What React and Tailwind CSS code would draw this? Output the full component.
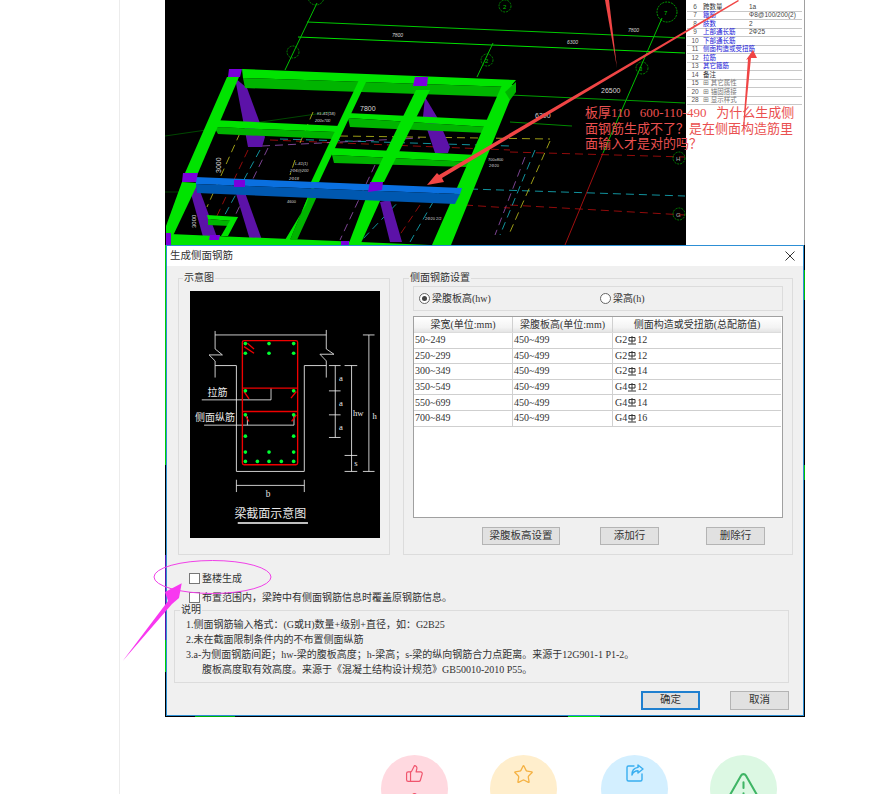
import React from 'react';
import { ThumbsUp, Star, TriangleAlert } from 'lucide-react';

const BR = '#00e400', DK = '#00b400', PT = '#7a00dc', PD = '#5c12a8', BT = '#0a70e0', BD = '#0058b0';

const polys = [
  // purple shafts
  [PD, '235,78 247,88 265,137 262,147 248,147'],
  [PD, '425,97 437,117 450,147 448,153 435,153 423,117'],
  [PD, '188,183 197,183 217,237 203,237'],
  [PD, '234,187 243,187 262,240 250,240'],
  [PD, '380,202 390,200 402,242 390,242'],
  // horizontal beams
  [BR, '242,69 516,80 510,87 243,78'],
  [DK, '243,78 510,87 505,97 245,88'],
  [BR, '213,120 340,126 335,132 214,127'],
  [DK, '214,127 335,132 333,139 218,134'],
  [BR, '347,113 492,120 487,127 348,118'],
  [DK, '348,118 487,127 485,133 350,127'],
  [BR, '332,148 478,155 473,162 332,155'],
  [DK, '332,155 473,162 467,167 334,163'],
  [BR, '207,215 238,217 232,221 208,219'],
  [DK, '208,219 232,221 230,226 208,225'],
  [BR, '170,234 430,245 170,245'],
  // diagonal beams
  [BR, '227,77 239,77 198,173 185,173'],
  [BR, '182,182 198,183 171,240 166,240 166,226'],
  [BR, '359,80 366,82 319,182 311,182'],
  [DK, '312,187 319,192 297,240 290,240'],
  [BR, '306,205 312,187 290,240 285,240'],
  [BR, '416,90 430,90 384,182 371,182'],
  [BR, '369,190 384,192 361,243 349,243'],
  [BR, '502,85 516,85 451,245 432,245'],
  [DK, '516,82 516,92 510,100 505,92'],
  [BR, '232,217 238,217 228,236 221,236'],
  // blue beam
  [BT, '195,177 462,188 460,194 196,184'],
  [BD, '196,184 460,194 455,204 197,193'],
  // caps
  [PT, '229,69 242,69 240,77 228,77'],
  [PT, '415,77 428,77 427,86 413,86'],
  [PT, '183,173 198,173 196,182 182,182'],
  [PT, '234,180 245,180 245,187 234,187'],
  [PT, '370,182 383,182 382,190 368,192'],
  [PT, '210,235 220,235 219,240 209,240'],
  [PT, '341,241 349,241 349,245 341,245'],
  [PT, '166,233 171,233 171,245 166,245'],
];

const cadLines = [
  ['#00c800', 307, 22, 685, 38, 1], ['#00e000', 298, 37, 685, 53, 1],
  ['#00c000', 317, 3, 285, 70, 1], ['#00c000', 493, 43, 477, 77, 1],
  ['#00c000', 662, 18, 603, 153, 1], ['#00a000', 510, 95, 685, 103, 1],
  ['#008800', 510, 122, 572, 126, 1], ['#006600', 165, 136, 330, 112, 0.7],
  ['#a01010', 603, 153, 565, 245, 1], ['#005500', 165, 192, 190, 192, 0.7],
];
const dashed = [
  ['#d01010', 270, 140, 510, 150], ['#d01010', 510, 152, 685, 157], ['#d01010', 510, 205, 685, 215],
  ['#18d0e0', 280, 139, 510, 146], ['#18d0e0', 470, 189, 685, 196], ['#b060d0', 262, 146, 420, 138],
  ['#e0e020', 340, 136, 550, 139], ['#e0e020', 313, 112, 300, 143], ['#e0e020', 240, 133, 207, 207],
  ['#e0e020', 550, 141, 510, 232], ['#18d0e0', 260, 150, 222, 220], ['#d01010', 248, 150, 215, 220],
  ['#b060d0', 268, 148, 232, 222], ['#e0e020', 295, 160, 290, 175], ['#b060d0', 525, 157, 495, 235],
  ['#18d0e0', 535, 150, 500, 235], ['#b060d0', 375, 165, 340, 240], ['#18d0e0', 405, 195, 360, 242],
  ['#d01010', 420, 205, 395, 242], ['#d01010', 465, 205, 510, 208], ['#18d0e0', 440, 190, 410, 242],
];
const axisCircles = [[316, -3, 8, '#00a000'], [293, 52, 6, '#00a000'], [487, 60, 6, '#00a000'], [505, 6, 6, '#00a000'], [667, 12, 10, '#00c000'], [642, 68, 6, '#00a000'], [679, 158, 6, '#00a000'], [679, 214, 6, '#00a000']];

function CadDrawing() {
  return (
    <svg className="absolute inset-0" width="640" height="717" viewBox="165 0 640 717">
      {cadLines.map((l, i) => <line key={i} x1={l[1]} y1={l[2]} x2={l[3]} y2={l[4]} stroke={l[0]} strokeWidth={l[5]} />)}
      {dashed.map((l, i) => <line key={i} x1={l[1]} y1={l[2]} x2={l[3]} y2={l[4]} stroke={l[0]} strokeWidth="0.7" strokeDasharray="8 5" />)}
      {axisCircles.map((c, i) => <circle key={i} cx={c[0]} cy={c[1]} r={c[2]} fill="none" stroke={c[3]} strokeWidth="0.8" strokeDasharray="2 1" />)}
      <g fontFamily="'Liberation Sans',sans-serif" fill="#d8d8d8">
        <text x="392" y="37" fontSize="5" fontStyle="italic">7800</text>
        <text x="628" y="32" fontSize="5" fontStyle="italic">7800</text>
        <text x="567" y="44" fontSize="5" fontStyle="italic">6300</text>
        <text x="360" y="111" fontSize="7">7800</text>
        <text x="601" y="93" fontSize="7">26500</text>
        <text x="535" y="118" fontSize="7">6300</text>
        <text x="0" y="0" fontSize="7" transform="translate(221,173) rotate(-90)">3000</text>
        <text x="0" y="0" fontSize="6" transform="translate(196,228) rotate(-90)">3000</text>
        <text x="295" y="165" fontSize="4" fontStyle="italic">L-61(1)</text>
        <text x="290" y="172" fontSize="4" fontStyle="italic">2Φ6@200</text>
        <text x="289" y="180" fontSize="4" fontStyle="italic">2Φ18</text>
        <text x="317" y="115" fontSize="4" fontStyle="italic">KL-61(1B)</text>
        <text x="315" y="122" fontSize="4" fontStyle="italic">200x700</text>
        <text x="287" y="203" fontSize="4">4600</text>
        <text x="425" y="220" fontSize="4">2Φ20 2/2</text>
        <text x="488" y="161" fontSize="4">700x800</text>
        <text x="489" y="167" fontSize="4">2Φ20</text>
      </g>
      <text x="676" y="161" fontSize="6" fill="#b0b0b0" fontFamily="'Liberation Sans',sans-serif">H</text>
      <text x="676" y="217" fontSize="6" fill="#b0b0b0" fontFamily="'Liberation Sans',sans-serif">G</text>
      <text x="639" y="71" fontSize="6" fill="#00c000" fontFamily="'Liberation Sans',sans-serif">3</text>
      <text x="664" y="15" fontSize="6" fill="#00c000" fontFamily="'Liberation Sans',sans-serif">7</text>
      <text x="503" y="9" fontSize="6" fill="#00c000" fontFamily="'Liberation Sans',sans-serif">2</text>
      <text x="485" y="63" fontSize="6" fill="#00c000" fontFamily="'Liberation Sans',sans-serif">2</text>
      {polys.map((p, i) => <polygon key={i} fill={p[0]} points={p[1]} />)}
      {/* parts of the drawing seen along the dialog's edges */}
      <line x1="165.5" y1="245" x2="165.5" y2="465" stroke="#00d000" />
      <line x1="165.5" y1="555" x2="165.5" y2="640" stroke="#5c12a8" />
      <line x1="165.5" y1="640" x2="165.5" y2="672" stroke="#00d000" />
      <line x1="195" y1="716.5" x2="235" y2="716.5" stroke="#00b000" />
      <line x1="568" y1="716.5" x2="600" y2="716.5" stroke="#00e000" />
      <line x1="804.5" y1="270" x2="804.5" y2="300" stroke="#00c000" />
      <line x1="804.5" y1="465" x2="804.5" y2="480" stroke="#00c000" />
    </svg>
  );
}

const panelRows = [
  ['6', '跨数量', '1a', 0], ['7', '箍筋', 'Φ8@100/200(2)', 1], ['8', '肢数', '2', 1],
  ['9', '上部通长筋', '2Φ25', 1], ['10', '下部通长筋', '', 1], ['11', '侧面构造或受扭筋', '', 1], ['12', '拉筋', '', 1],
  ['13', '其它箍筋', '', 1], ['14', '备注', '', 0], ['15', '⊞ 其它属性', '', 2], ['20', '⊞ 锚固搭接', '', 2], ['28', '⊞ 显示样式', '', 2],
];

function PropertyPanel() {
  return (
    <div className="absolute left-[521px] top-0 w-[119px] h-[245px] bg-white border-r border-[#a0a0a0] overflow-hidden font-['Liberation_Sans','Noto_Sans_CJK_SC',sans-serif] text-[6.5px] leading-none">
      <div className="flex flex-col pt-[3px]">
        {panelRows.map((r) => (
          <div key={r[0]} className="flex items-center h-[8.5px] border-b border-[#c8c8c8] ml-[1px] mr-[2px]">
            <span className="w-[16px] text-center text-[#555]">{r[0]}</span>
            <span className={r[3] === 1 ? 'w-[46px] whitespace-nowrap text-[#2020d8]' : r[3] === 2 ? 'w-[46px] whitespace-nowrap text-[#777]' : 'w-[46px] whitespace-nowrap text-[#333]'}>{r[1]}</span>
            <span className="text-[#444] whitespace-nowrap">{r[2]}</span>
          </div>
        ))}
      </div>
    </div>
  );
}

function BeamSection() {
  const dots = [[239,296],[310,296],[384,296],[239,325],[310,325],[384,325],[239,438],[384,438],[239,510],[384,510],[239,574],[384,574],[239,622],[310,622],[384,622],[239,650],[275,650],[310,650],[347,650],[384,650]];
  const white = ['148,258 148,312 170,330 130,330 148,348 148,398', '482,255 482,312 505,328 463,328 482,348 482,398', '148,270 482,270', '108,465 316,465 316,430', '115,541 385,541 385,510', '245,515 245,541',
    '509,362 509,578', '490,362 525,362', '490,438 525,438', '490,510 525,510', '490,578 525,578', '558,362 558,680', '537,362 575,362', '537,632 575,632', '537,680 575,680',
    '610,270 610,680', '592,270 627,270', '592,680 627,680', '212,722 416,722', '212,705 212,742', '416,705 416,742'];
  const red = ['245,295 265,312', '235,305 265,325', '235,440 250,462', '392,440 376,460', '238,510 250,530', '392,510 378,530', '230,430 396,430', '230,500 396,500'];
  const labels = [['拉筋', 125, 452, 30], ['侧面纵筋', 88, 528, 30], ['a', 520, 408, 26], ['a', 520, 485, 26], ['a', 520, 555, 26], ['hw', 562, 514, 26], ['s', 566, 664, 26], ['h', 621, 524, 26], ['b', 300, 757, 28], ['梁截面示意图', 206, 821, 36]];
  return (
    <svg width="190" height="247" viewBox="73 138 570 742" className="block bg-black">
      <polyline points="148,362 212,362 212,680 416,680 416,362 482,362" fill="none" stroke="#d0d0d0" strokeWidth="3" />
      {white.map((p) => <polyline key={p} points={p} fill="none" stroke="#f0f0f0" strokeWidth="2.5" />)}
      <rect x="230" y="287" width="166" height="373" rx="5" fill="none" stroke="#f00000" strokeWidth="4" />
      {red.map((p) => <polyline key={p} points={p} fill="none" stroke="#f00000" strokeWidth="4" />)}
      {dots.map((d) => <circle key={d.join()} cx={d[0]} cy={d[1]} r="5.5" fill="#00ff30" />)}
      <line x1="216" y1="835" x2="427" y2="835" stroke="#fff" strokeWidth="4" />
      {labels.map((l) => <text key={l[0] + l[1]} x={l[1]} y={l[2]} fontSize={l[3]} fill="#e8e8e8" fontFamily="'Liberation Serif','Noto Sans CJK SC',serif">{l[0]}</text>)}
    </svg>
  );
}

function Rebar() {
  return (
    <svg width="8" height="9" viewBox="0 0 8 9" className="inline-block mx-[1px] align-[-1px]">
      <path d="M1 1.5h6v3.5H1zM4 0v7.5M0 8h8" fill="none" stroke="#333" strokeWidth="1" />
    </svg>
  );
}

const rows = [
  ['50~249', 'G2', '12'], ['250~299', 'G2', '12'], ['300~349', 'G2', '14'],
  ['350~549', 'G4', '12'], ['550~699', 'G4', '14'], ['700~849', 'G4', '16'],
];

function Btn({ children, className = '' }) {
  return <button className={"flex items-center justify-center h-[18px] bg-[#e1e1e1] border border-[#b4b4b4] text-[10.5px] text-[#333] " + className}>{children}</button>;
}

function Radio({ on }) {
  return (
    <span className="w-[11px] h-[11px] rounded-full border border-[#666] bg-white flex items-center justify-center">
      {on && <span className="w-[5px] h-[5px] rounded-full bg-[#444]" />}
    </span>
  );
}

function Dialog() {
  return (
    <div className="absolute left-[1px] top-[245px] w-[638px] h-[471px] border border-[#2d8fd5] bg-[#f0f0f0] font-['Liberation_Serif','Noto_Sans_CJK_SC',serif] text-[10px] leading-none text-[#333]">
      <div className="h-[20px] bg-white flex items-center justify-between pl-[3px] pr-[5px]">
        <span className="text-[10.5px]">生成侧面钢筋</span>
        <svg width="16" height="16" viewBox="0 0 16 16"><path d="M3.5 3.5l9 9M12.5 3.5l-9 9" stroke="#333" strokeWidth="1" /></svg>
      </div>
      <div className="pl-[7px] pr-[14px]">
        <div className="flex gap-[13px] ml-[4px] mt-[12px] w-[615px]">
          <div className="relative w-[212px] shrink-0 h-[277px] border border-[#dcdcdc] pl-[11px] pt-[12px]">
            <span className="absolute left-[4px] -top-[6px] bg-[#f0f0f0] px-[1px]">示意图</span>
            <BeamSection />
          </div>
          <div className="relative w-[390px] shrink-0 h-[277px] border border-[#dcdcdc] pl-[9px] pt-[7px]">
            <span className="absolute left-[5px] -top-[6px] bg-[#f0f0f0] px-[1px]">侧面钢筋设置</span>
            <div className="w-[370px] h-[25px] border border-[#dcdcdc] flex items-center pl-[5px]">
              <div className="flex items-center gap-[2px] w-[181px]"><Radio on /><span>梁腹板高(hw)</span></div>
              <div className="flex items-center gap-[2px]"><Radio /><span>梁高(h)</span></div>
            </div>
            <div className="w-[370px] h-[202px] mt-[5px] border border-[#a0a0a0] bg-white">
              <div className="w-[367px]">
                <div className="flex h-[16px] bg-[linear-gradient(#fff,#f3f3f3_70%,#e4e4e4)] border-b border-[#dcdcdc] text-center items-center">
                  <span className="w-[99px] border-r border-[#d0d0d0] h-full flex items-center justify-center">梁宽(单位:mm)</span>
                  <span className="w-[100px] border-r border-[#d0d0d0] h-full flex items-center justify-center">梁腹板高(单位:mm)</span>
                  <span className="flex-1 flex items-center justify-center">侧面构造或受扭筋(总配筋值)</span>
                </div>
                {rows.map((r) => (
                  <div key={r[0]} className="flex h-[15.6px] items-center border-b border-[#cfcfcf]">
                    <span className="w-[99px] h-full border-r border-[#d0d0d0] flex items-center pl-[1px]">{r[0]}</span>
                    <span className="w-[100px] h-full border-r border-[#d0d0d0] flex items-center pl-[1px]">450~499</span>
                    <span className="flex-1 h-full flex items-center pl-[2px]">{r[1]}<Rebar />{r[2]}</span>
                  </div>
                ))}
              </div>
            </div>
            <div className="flex mt-[9px] pl-[69px]">
              <Btn className="w-[78px]">梁腹板高设置</Btn>
              <Btn className="w-[59px] ml-[40px]">添加行</Btn>
              <Btn className="w-[59px] ml-[47px]">删除行</Btn>
            </div>
          </div>
        </div>
        <div className="flex items-center gap-[2px] ml-[15px] mt-[18px] h-[11px]">
          <span className="w-[11px] h-[11px] border border-[#777] bg-white" /><span>整楼生成</span>
        </div>
        <div className="flex items-center gap-[2px] ml-[15px] mt-[8px] h-[11px]">
          <span className="w-[11px] h-[11px] border border-[#777] bg-white" /><span>布置范围内，梁跨中有侧面钢筋信息时覆盖原钢筋信息。</span>
        </div>
        <div className="relative h-[73px] mt-[7px] border border-[#dcdcdc] pl-[11px] pt-[6px]">
          <span className="absolute left-[5px] -top-[6px] bg-[#f0f0f0] px-[1px]">说明</span>
          <div className="h-[15px] flex items-center">1.侧面钢筋输入格式：(G或H)数量+级别+直径，如：G2B25</div>
          <div className="h-[15px] flex items-center">2.未在截面限制条件内的不布置侧面纵筋</div>
          <div className="h-[15px] flex items-center whitespace-nowrap">3.a-为侧面钢筋间距；hw-梁的腹板高度；h-梁高；s-梁的纵向钢筋合力点距离。来源于12G901-1 P1-2。</div>
          <div className="h-[15px] flex items-center pl-[16px] whitespace-nowrap">腹板高度取有效高度。来源于《混凝土结构设计规范》GB50010-2010 P55。</div>
        </div>
        <div className="flex justify-end mt-[8px]">
          <Btn className="w-[59px] h-[19px] !border-2 !border-[#1f7fcf]">确定</Btn>
          <Btn className="w-[59px] h-[19px] ml-[30px]">取消</Btn>
        </div>
      </div>
    </div>
  );
}

function Annotations() {
  return (
    <svg className="absolute inset-0 pointer-events-none" width="882" height="794" viewBox="0 0 882 794">
      <polygon fill="#f04545" points="738,0 739,1 442,178 444,182 427,185 437,173 439,175" />
      <polygon fill="#f04545" points="605,0 609,0 617,68" />
      <polygon fill="#f04545" points="753,50 757,58 751,58 744,128 743,128 748,59 746,60" />
      <g fill="#ea5050" fontSize="13" fontFamily="'Liberation Serif','Noto Sans CJK SC',serif">
        <text x="585" y="117">{'板厚110\u00a0\u00a0\u00a0600-110-490\u00a0\u00a0\u00a0为什么生成侧'}</text>
        <text x="585" y="133">面钢筋生成不了？是在侧面构造筋里</text>
        <text x="585" y="148">面输入才是对的吗？</text>
      </g>
      <ellipse cx="212.5" cy="577" rx="58.5" ry="16.5" fill="none" stroke="#f040e8" strokeWidth="1" />
      <polygon fill="#f838f0" points="122.7,661 168,601 165,592 181.7,583.3 179,598 172,604" />
    </svg>
  );
}

function Action({ bg, className = '', children }) {
  return <div className={"w-[67px] h-[67px] rounded-full flex flex-col items-center pt-[9px] " + bg + " " + className}>{children}</div>;
}

export default function App() {
  return (
    <div className="relative w-[882px] h-[794px] overflow-hidden bg-white flex">
      <div className="w-[120px] shrink-0 border-r border-[#ececec]" />
      <div className="pl-[45px] flex flex-col">
        <div className="relative w-[640px] h-[717px] bg-black shrink-0">
          <CadDrawing />
          <PropertyPanel />
          <Dialog />
        </div>
        <div className="flex mt-[38px] ml-[216px] shrink-0">
          <Action bg="bg-[#ffd9e0]">
            <ThumbsUp size={19} strokeWidth={1.5} color="#f0566e" />
            <span className="mt-[9px] text-[12px] leading-none text-[#f0566e] font-['Liberation_Sans',sans-serif]">0</span>
          </Action>
          <Action bg="bg-[#ffeecc]" className="ml-[42px]"><Star size={21} strokeWidth={1.5} color="#f5b244" /></Action>
          <Action bg="bg-[#d3efff]" className="ml-[44px]">
            <svg width="18" height="18" viewBox="0 0 18 18" fill="none" stroke="#38aef0" strokeWidth="1.4" strokeLinejoin="round" strokeLinecap="round">
              <path d="M8 2H2.5A1.5 1.5 0 0 0 1 3.5v12A1.5 1.5 0 0 0 2.5 17h12a1.5 1.5 0 0 0 1.5-1.5V10" />
              <path d="M12 1l5 4-5 4V6.8C9 6.8 7 8.3 6 11c-.2-4.5 2-7 6-7.6z" />
            </svg>
          </Action>
          <Action bg="bg-[#dcf8e3]" className="ml-[42px]">
            <TriangleAlert size={33} strokeWidth={1.5} color="#3fb565" className="mt-[6px]" />
          </Action>
        </div>
      </div>
      <Annotations />
    </div>
  );
}
